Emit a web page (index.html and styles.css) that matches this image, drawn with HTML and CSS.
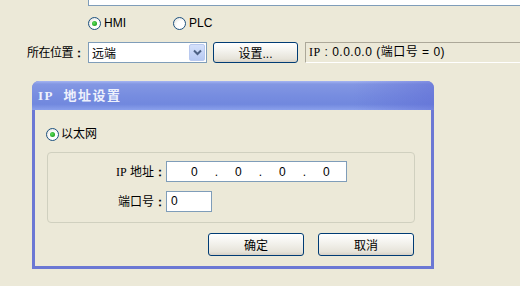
FILE: index.html
```html
<!DOCTYPE html>
<html>
<head>
<meta charset="utf-8">
<link rel="stylesheet" href="styles.css">
</head>
<body>
<div class="page">
  <div class="top-box"></div>

  <div class="radio-row">
    <label class="radio-item hmi"><span class="radio checked"></span><span>HMI</span></label>
    <label class="radio-item"><span class="radio"></span><span>PLC</span></label>
  </div>

  <div class="loc-row">
    <span class="loc-label">所在位置<span class="colon">：</span></span>
    <div class="select">
      <span class="select-text">远端</span>
      <span class="select-btn">
        <svg width="9" height="7" viewBox="0 0 9 7"><path d="M1 1.5 L4.5 5 L8 1.5" fill="none" stroke="#4d6185" stroke-width="2"/></svg>
      </span>
    </div>
    <button class="btn set-btn">设置...</button>
    <div class="info"><span class="serif">IP</span> : 0.0.0.0 (端口号 = 0)</div>
  </div>

  <div class="dialog">
    <div class="titlebar"><span class="serif">IP</span>&nbsp;&nbsp;地址设置</div>
    <div class="dlg-body">
      <label class="radio-item eth"><span class="radio checked"></span><span>以太网</span></label>
      <div class="group">
        <div class="field-row">
          <span class="field-label"><span class="serif">IP</span> 地址<span class="colon">：</span></span>
          <div class="ip-input">
            <span>0</span><span>.</span><span>0</span><span>.</span><span>0</span><span>.</span><span>0</span>
          </div>
        </div>
        <div class="field-row">
          <span class="field-label">端口号<span class="colon">：</span></span>
          <div class="port-input">0</div>
        </div>
      </div>
      <div class="buttons">
        <button class="btn dlg-btn">确定</button>
        <button class="btn dlg-btn">取消</button>
      </div>
    </div>
  </div>
</div>
</body>
</html>
```

FILE: styles.css
```css
html, body {
  margin: 0;
  padding: 0;
  background: #ece9d8;
}
body {
  width: 520px;
  height: 286px;
  overflow: hidden;
  font-family: "Liberation Sans", "Noto Sans CJK SC", sans-serif;
  font-size: 12px;
  color: #000;
}
.page {
  width: 520px;
  height: 286px;
}
.serif {
  font-family: "Liberation Serif", "Noto Sans CJK SC", serif;
}
.colon {
  display: inline-block;
  width: 12px;
  text-align: center;
  font-family: "Liberation Sans", sans-serif;
  font-weight: bold;
}
.top-box {
  margin-left: 88px;
  height: 6px;
  box-sizing: border-box;
  background: #fff;
  border: 1px solid #7f9db9;
  border-top: 0;
  border-right: 0;
}

/* radios */
.radio-row {
  display: flex;
  margin-top: 11px;
  margin-left: 88px;
  height: 13px;
}
.radio-item {
  display: flex;
  align-items: center;
  gap: 3px;
  height: 13px;
  line-height: 13px;
}
.radio-item.hmi {
  width: 85px;
}
.radio {
  width: 11px;
  height: 11px;
  border: 1px solid #1c5180;
  border-radius: 50%;
  background: radial-gradient(circle at 65% 65%, #ffffff 0, #ffffff 40%, #dcdcd4 100%);
  position: relative;
  flex: none;
}
.radio.checked::after {
  content: "";
  position: absolute;
  left: 3px;
  top: 3px;
  width: 5px;
  height: 5px;
  border-radius: 50%;
  background: radial-gradient(circle at 40% 40%, #5ee35e 0, #21a121 70%);
}

/* location row */
.loc-row {
  display: flex;
  align-items: center;
  margin-top: 12px;
  height: 21px;
}
.loc-label {
  width: 88px;
  box-sizing: border-box;
  padding-left: 27px;
  white-space: nowrap;
  letter-spacing: -0.5px;
}
.select {
  width: 119px;
  height: 21px;
  box-sizing: border-box;
  border: 1px solid #7f9db9;
  background: #fff;
  display: flex;
  align-items: center;
  justify-content: space-between;
}
.select-text {
  padding-left: 3px;
}
.select-btn {
  width: 16px;
  height: 17px;
  margin-right: 1px;
  background: linear-gradient(#d5e1fb, #b7c9f3);
  border: 1px solid #b9c9ef;
  box-sizing: border-box;
  border-radius: 2px;
  display: flex;
  align-items: center;
  justify-content: center;
}
.btn {
  font-family: "Liberation Sans", "Noto Sans CJK SC", sans-serif;
  font-size: 12px;
  color: #000;
  border: 1px solid #003c74;
  border-radius: 3px;
  background: linear-gradient(#ffffff 0, #f4f3ee 40%, #e6e3d9 85%, #d6d0c5 100%);
  padding: 0;
  box-sizing: border-box;
}
.set-btn {
  width: 85px;
  height: 21px;
  margin-left: 6px;
}
.info {
  margin-left: 7px;
  flex: 1;
  height: 21px;
  box-sizing: border-box;
  border-top: 1px solid #aca899;
  border-left: 1px solid #aca899;
  border-bottom: 1px solid #ffffff;
  padding-left: 3px;
  line-height: 19px;
  white-space: nowrap;
  letter-spacing: 0.5px;
}

/* dialog */
.dialog {
  margin-top: 18px;
  margin-left: 32px;
  width: 402px;
  height: 188px;
  box-sizing: border-box;
  padding: 0 3px 3px;
  background: #6b78d4;
  border-radius: 7px 7px 0 0;
}
.titlebar {
  margin: 0 -3px;
  height: 29px;
  box-sizing: border-box;
  border-radius: 7px 7px 0 0;
  background:
    linear-gradient(to right, rgba(90,100,210,0) 80%, rgba(90,100,210,0.45) 100%),
    linear-gradient(#a5b5f2 0, #8397e3 3px, #778de0 50%, #7188de 80%, #8aa0eb 100%);
  color: #eef1fc;
  font-weight: bold;
  font-size: 13px;
  padding-left: 6px;
  line-height: 30px;
  letter-spacing: 1.5px;
  font-family: "Liberation Serif", "Noto Sans CJK SC", serif;
}
.dlg-body {
  background: #ece9d8;
  height: 156px;
  padding-top: 18px;
  box-sizing: border-box;
}
.radio-item.eth {
  margin-left: 11px;
  gap: 2px;
}
.group {
  margin-top: 11px;
  margin-left: 12px;
  width: 368px;
  height: 71px;
  box-sizing: border-box;
  border: 1px solid #d0d0bf;
  border-radius: 4px;
  padding-top: 8px;
  display: flex;
  flex-direction: column;
  gap: 9px;
}
.field-row {
  display: flex;
  align-items: center;
  height: 21px;
}
.field-label {
  width: 118px;
  text-align: right;
  white-space: nowrap;
}
.ip-input {
  width: 181px;
  height: 21px;
  box-sizing: border-box;
  border: 1px solid #7f9db9;
  background: #fff;
  display: flex;
  align-items: center;
  gap: 17px;
  padding-left: 24px;
}
.port-input {
  width: 46px;
  height: 21px;
  box-sizing: border-box;
  border: 1px solid #7f9db9;
  background: #fff;
  padding-left: 4px;
  line-height: 19px;
}
.buttons {
  display: flex;
  justify-content: flex-end;
  gap: 14px;
  margin-top: 10px;
  margin-right: 17px;
}
.dlg-btn {
  width: 96px;
  height: 23px;
}
```
